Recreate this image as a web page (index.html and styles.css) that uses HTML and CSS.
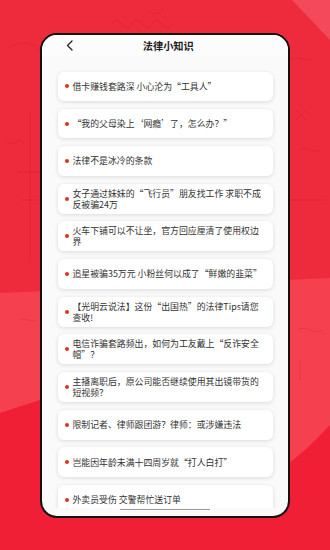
FILE: index.html
```html
<!DOCTYPE html>
<html lang="zh-CN">
<head>
<meta charset="utf-8">
<title>法律小知识</title>
<link rel="stylesheet" href="styles.css">
</head>
<body>
<div class="phone">
  <div class="header">
    <svg class="back" width="7" height="11" viewBox="0 0 7 11"><path d="M6 1 L1.5 5.5 L6 10" fill="none" stroke="#222" stroke-width="1.3" stroke-linecap="round" stroke-linejoin="round"/></svg>
    <div class="title">法律小知识</div>
    <span></span>
  </div>
  <div class="list">
    <div class="card"><i class="dot"></i><span class="txt">借卡赚钱套路深 小心沦为“工具人”</span></div>
    <div class="card"><i class="dot"></i><span class="txt">“我的父母染上‘网瘾’了，怎么办？”</span></div>
    <div class="card"><i class="dot"></i><span class="txt">法律不是冰冷的条款</span></div>
    <div class="card"><i class="dot"></i><span class="txt">女子通过妹妹的“飞行员”朋友找工作 求职不成反被骗24万</span></div>
    <div class="card"><i class="dot"></i><span class="txt">火车下铺可以不让坐，官方回应厘清了使用权边界</span></div>
    <div class="card"><i class="dot"></i><span class="txt">追星被骗35万元 小粉丝何以成了“鲜嫩的韭菜”</span></div>
    <div class="card"><i class="dot"></i><span class="txt">【光明云说法】这份“出国热”的法律Tips请您查收!</span></div>
    <div class="card"><i class="dot"></i><span class="txt">电信诈骗套路频出，如何为工友戴上“反诈安全帽”？</span></div>
    <div class="card"><i class="dot"></i><span class="txt">主播离职后，原公司能否继续使用其出镜带货的短视频？</span></div>
    <div class="card"><i class="dot"></i><span class="txt">限制记者、律师跟团游？律师：或涉嫌违法</span></div>
    <div class="card"><i class="dot"></i><span class="txt">岂能因年龄未满十四周岁就“打人白打”</span></div>
    <div class="card"><i class="dot"></i><span class="txt">外卖员受伤 交警帮忙送订单</span></div>
  </div>
  <div class="bottom"><div class="indicator"></div></div>
</div>
</body>
</html>
```
FILE: styles.css
```css
html, body {
  margin: 0;
  padding: 0;
}
body {
  width: 330px;
  height: 550px;
  overflow: hidden;
  box-sizing: border-box;
  padding: 33px 0 0 40px;
  font-family: "Noto Sans CJK SC", "Noto Sans", sans-serif;
  background: url("data:image/svg+xml;utf8,<svg xmlns='http://www.w3.org/2000/svg' width='330' height='550'><rect width='330' height='550' fill='%23f01f35'/><path d='M0 0H330V279Q250 284 165 289T0 293Z' fill='%23ee2b3d'/><path d='M0 293Q120 288 330 278V425Q305 452 285 466Q150 440 40 400L0 413Z' fill='%23f4404f'/><path d='M292 0H330V40Z' fill='%23f4495a'/><g fill='none' stroke='%23a80018' stroke-opacity='.16' stroke-width='1'><path d='M112 24c7-13 13 13 20 0s13 13 20 0 13 13 20 0'/><path d='M30 112v150M18 172h24M22 200h16'/><path d='M10 48c10-8 24-6 30 4M60 36l10 8M150 12c6 4 10 0 14-4'/><path d='M290 60c8-6 16 4 24-2M296 110l10 10M306 110l-10 10M300 150c6-4 14 4 20 0M290 200h36'/><path d='M6 140c6 10 12-6 18 4M20 320c6-4 10 4 16 0'/><path d='M298 330c8-6 16 6 24 0M300 360v20'/></g></svg>") no-repeat;
}
.phone {
  width: 250px;
  height: 485px;
  box-sizing: border-box;
  border: 2.5px solid #111;
  border-radius: 17px;
  background: #fafafa;
  overflow: hidden;
  display: flex;
  flex-direction: column;
}
.header {
  flex: none;
  height: 21px;
  display: grid;
  grid-template-columns: 1fr auto 1fr;
  align-items: center;
  padding: 0 0 0 23.5px;
  background: #fcfcfc;
}
.back {
  display: block;
  justify-self: start;
}
.title {
  font-size: 10.2px;
  font-weight: 700;
  color: #222;
  line-height: 14px;
  margin-left: -17px;
}
.list {
  flex: 1;
  min-height: 0;
  overflow: hidden;
  padding: 15.5px 15.5px 0;
  display: flex;
  flex-direction: column;
  gap: 7.85px;
}
.card {
  flex: none;
  min-height: 29.5px;
  box-sizing: border-box;
  background: #fff;
  border-radius: 6px;
  box-shadow: 0 1px 4px rgba(0, 0, 0, 0.13);
  display: flex;
  align-items: center;
  padding: 4px 7px;
}
.dot {
  flex: none;
  width: 4px;
  height: 4px;
  border-radius: 50%;
  background: #e0321c;
  margin-right: 4px;
}
.txt {
  font-size: 8.9px;
  line-height: 11px;
  color: #333;
  width: 193px;
  text-spacing-trim: space-all;
}
.bottom {
  flex: none;
  height: 8px;
}
.indicator {
  width: 90px;
  height: 1.2px;
  margin: 0.5px auto 0;
  background: #9a9a9a;
}
```
